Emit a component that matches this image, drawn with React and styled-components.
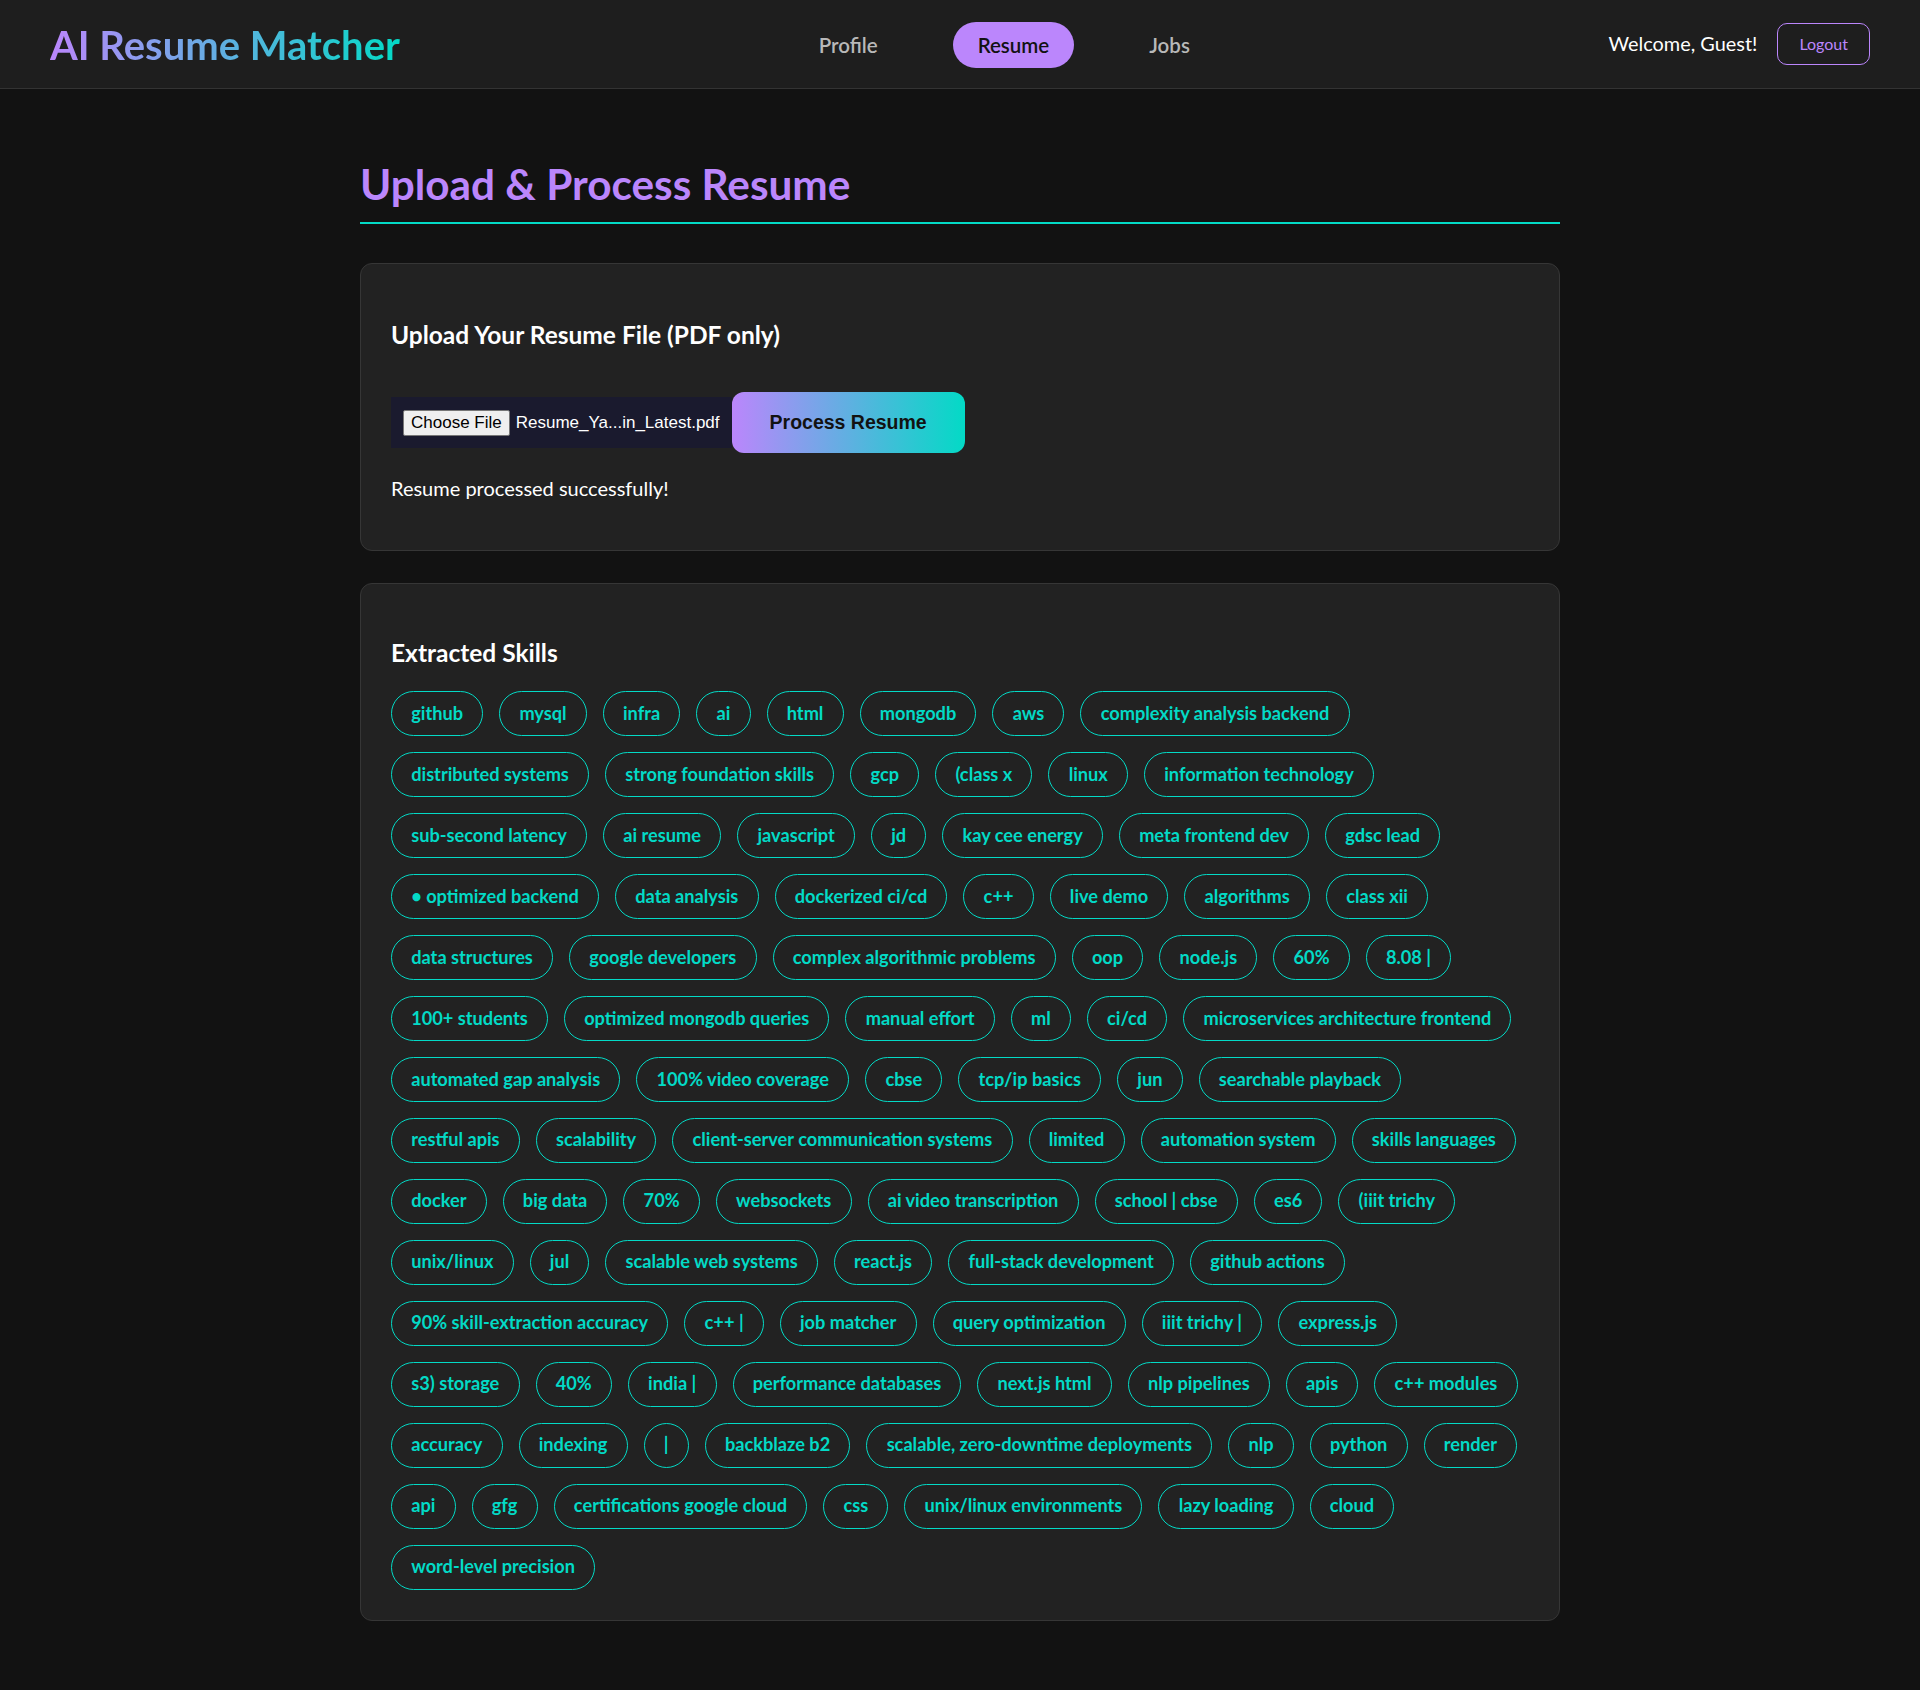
import React from 'react';
import styled, { createGlobalStyle } from 'styled-components';

const PURPLE = '#bb86fc';
const TEAL = '#03dac6';

const GlobalStyle = createGlobalStyle`
  html, body {
    margin: 0;
    padding: 0;
    background: #121212;
  }
  body {
    font-family: "Lato", "Open Sans", "Noto Sans", sans-serif;
    color: #ffffff;
    min-height: 1690px;
  }
  * { box-sizing: border-box; }
`;

const Header = styled.header`
  height: 89px;
  padding: 0 50px;
  display: flex;
  align-items: center;
  justify-content: space-between;
  background: #1e1e1e;
  border-bottom: 1px solid #333333;
`;

const Logo = styled.div`
  font-size: 40px;
  font-weight: 700;
  line-height: 48px;
  background: linear-gradient(90deg, ${PURPLE}, ${TEAL});
  -webkit-background-clip: text;
  background-clip: text;
  color: transparent;
  padding-top: 2px;
`;

const Nav = styled.nav`
  display: flex;
  align-items: center;
  gap: 50px;
  padding-top: 2px;
`;

const NavLink = styled.a`
  display: inline-block;
  padding: 10px 25px;
  border-radius: 25px;
  font-size: 20.5px;
  font-weight: 600;
  line-height: 26px;
  text-decoration: none;
  cursor: pointer;
  color: ${(p) => (p.$active ? '#121212' : '#b8b8b8')};
  background: ${(p) => (p.$active ? PURPLE : 'transparent')};
`;

const UserArea = styled.div`
  display: flex;
  align-items: center;
  gap: 20px;
`;

const Welcome = styled.span`
  font-size: 19.9px;
  color: #ffffff;
  margin-top: -2px;
`;

const LogoutButton = styled.button`
  font-family: inherit;
  font-size: 16px;
  line-height: 22px;
  color: ${PURPLE};
  background: transparent;
  border: 1px solid ${PURPLE};
  border-radius: 10px;
  padding: 9px 21px;
  cursor: pointer;
`;

const Main = styled.main`
  max-width: 1200px;
  margin: 0 auto;
  padding: 71px 0 60px;
`;

const Title = styled.h1`
  margin: 0 0 39px;
  padding-bottom: 14px;
  border-bottom: 2px solid ${TEAL};
  font-size: 42.3px;
  line-height: 48px;
  font-weight: 700;
  color: ${PURPLE};
`;

const Card = styled.section`
  background: #222222;
  border: 1px solid #363636;
  border-radius: 12px;
  padding: 30px;
  margin-bottom: 32px;
`;

const CardHeading = styled.h3`
  margin: ${(p) => p.$top}px 0 ${(p) => p.$bottom}px;
  font-size: 24.5px;
  line-height: 30px;
  font-weight: 700;
  color: #ffffff;
`;

const UploadRow = styled.div`
  display: flex;
  align-items: center;
  height: 61px;
`;

const FileBox = styled.label`
  display: flex;
  align-items: center;
  gap: 6px;
  height: 51px;
  padding: 0 12px;
  background: #1a1a2e;
  font-family: "Liberation Sans", Arial, sans-serif;
  font-size: 17px;
  color: #ffffff;
  cursor: pointer;
`;

const ChooseButton = styled.span`
  display: inline-block;
  padding: 2px 7px;
  background: #efefef;
  color: #000000;
  border: 1px solid #767676;
  border-radius: 2px;
  line-height: 20px;
`;

const FileName = styled.span`
  white-space: nowrap;
`;

const ProcessButton = styled.button`
  height: 61px;
  padding: 0 38px;
  border: none;
  border-radius: 12px;
  background: linear-gradient(90deg, ${PURPLE}, ${TEAL});
  color: #121212;
  font-family: "Liberation Sans", Arial, sans-serif;
  font-size: 19.5px;
  font-weight: 700;
  cursor: pointer;
`;

const Message = styled.p`
  margin: 23px 0 20px;
  font-size: 20px;
  line-height: 24px;
  color: #ffffff;
`;

const ChipRows = styled.div`
  display: flex;
  flex-direction: column;
  gap: 16px;
`;

const ChipRow = styled.div`
  display: flex;
  flex-wrap: nowrap;
  gap: 16px;
`;

const Chip = styled.span`
  display: inline-block;
  white-space: nowrap;
  padding: 9.6px 19.2px;
  border: 1px solid ${TEAL};
  border-radius: 25px;
  color: ${TEAL};
  font-size: 18.2px;
  font-weight: 700;
  line-height: 23.8px;
`;

const skillRows = [
  ['github', 'mysql', 'infra', 'ai', 'html', 'mongodb', 'aws', 'complexity analysis backend'],
  ['distributed systems', 'strong foundation skills', 'gcp', '(class x', 'linux', 'information technology'],
  ['sub-second latency', 'ai resume', 'javascript', 'jd', 'kay cee energy', 'meta frontend dev', 'gdsc lead'],
  ['• optimized backend', 'data analysis', 'dockerized ci/cd', 'c++', 'live demo', 'algorithms', 'class xii'],
  ['data structures', 'google developers', 'complex algorithmic problems', 'oop', 'node.js', '60%', '8.08 |'],
  ['100+ students', 'optimized mongodb queries', 'manual effort', 'ml', 'ci/cd', 'microservices architecture frontend'],
  ['automated gap analysis', '100% video coverage', 'cbse', 'tcp/ip basics', 'jun', 'searchable playback'],
  ['restful apis', 'scalability', 'client-server communication systems', 'limited', 'automation system', 'skills languages'],
  ['docker', 'big data', '70%', 'websockets', 'ai video transcription', 'school | cbse', 'es6', '(iiit trichy'],
  ['unix/linux', 'jul', 'scalable web systems', 'react.js', 'full-stack development', 'github actions'],
  ['90% skill-extraction accuracy', 'c++ |', 'job matcher', 'query optimization', 'iiit trichy |', 'express.js'],
  ['s3) storage', '40%', 'india |', 'performance databases', 'next.js html', 'nlp pipelines', 'apis', 'c++ modules'],
  ['accuracy', 'indexing', '|', 'backblaze b2', 'scalable, zero-downtime deployments', 'nlp', 'python', 'render'],
  ['api', 'gfg', 'certifications google cloud', 'css', 'unix/linux environments', 'lazy loading', 'cloud'],
  ['word-level precision'],
];

export default function App() {
  return (
    <>
      <GlobalStyle />
      <Header>
        <Logo>AI Resume Matcher</Logo>
        <Nav>
          <NavLink>Profile</NavLink>
          <NavLink $active>Resume</NavLink>
          <NavLink>Jobs</NavLink>
        </Nav>
        <UserArea>
          <Welcome>Welcome, Guest!</Welcome>
          <LogoutButton>Logout</LogoutButton>
        </UserArea>
      </Header>
      <Main>
        <Title>Upload &amp; Process Resume</Title>
        <Card>
          <CardHeading $top={26} $bottom={42}>Upload Your Resume File (PDF only)</CardHeading>
          <UploadRow>
            <FileBox>
              <ChooseButton>Choose File</ChooseButton>
              <FileName>Resume_Ya...in_Latest.pdf</FileName>
            </FileBox>
            <ProcessButton>Process Resume</ProcessButton>
          </UploadRow>
          <Message>Resume processed successfully!</Message>
        </Card>
        <Card>
          <CardHeading $top={24} $bottom={23}>Extracted Skills</CardHeading>
          <ChipRows>
            {skillRows.map((row, i) => (
              <ChipRow key={i}>
                {row.map((s) => (
                  <Chip key={s}>{s}</Chip>
                ))}
              </ChipRow>
            ))}
          </ChipRows>
        </Card>
      </Main>
    </>
  );
}
